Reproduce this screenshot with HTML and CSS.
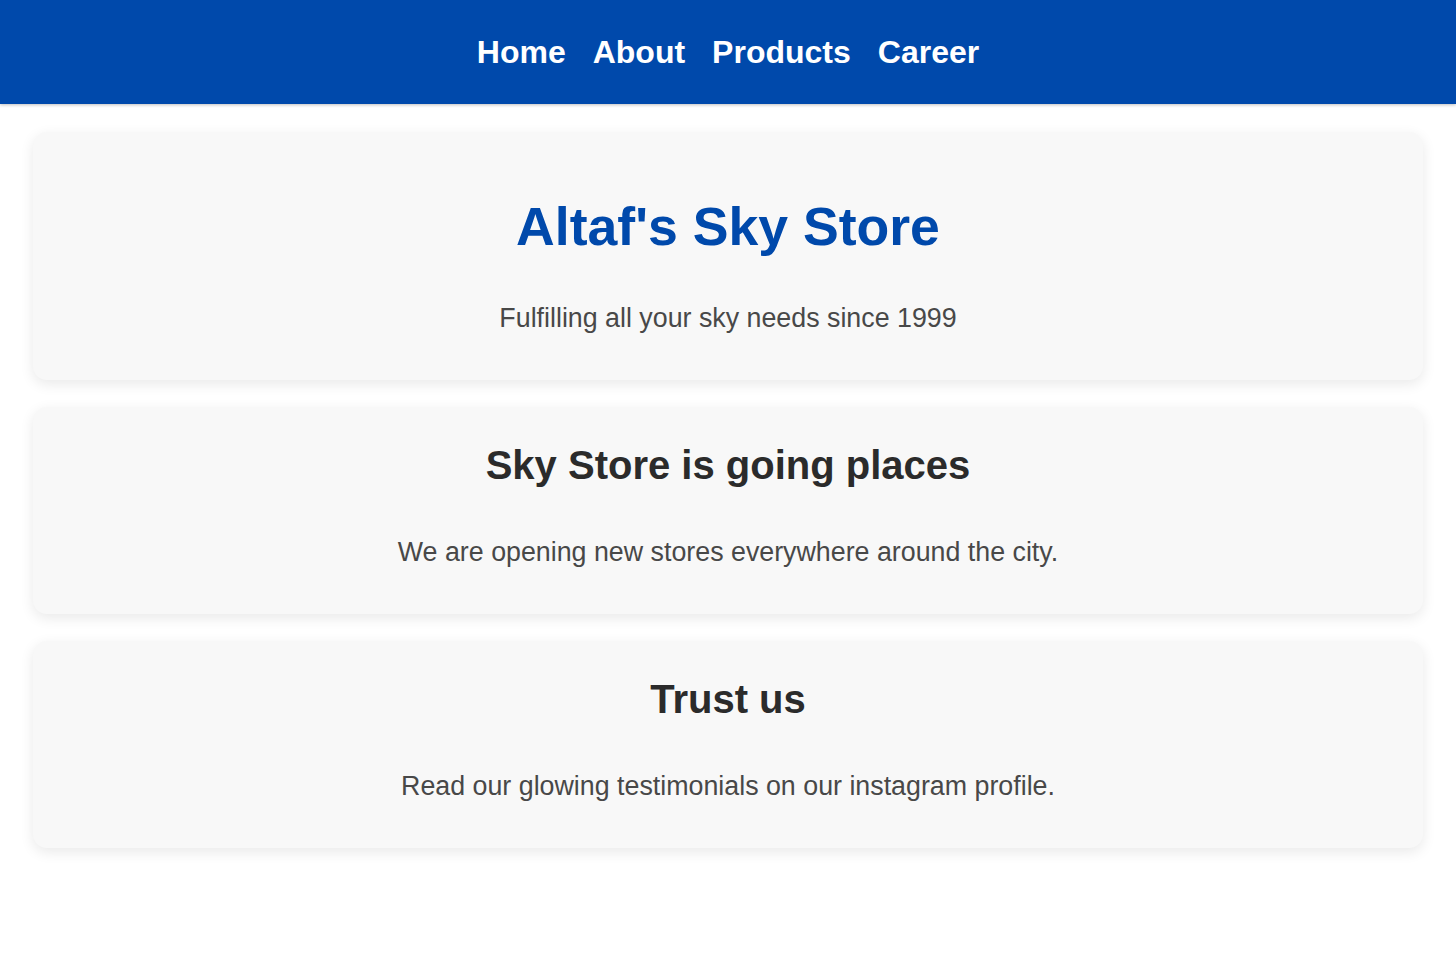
FILE: index.html
```html
<!DOCTYPE html>
<html lang="en">
<head>
<meta charset="utf-8">
<title>Altaf's Sky Store</title>
<link rel="stylesheet" href="styles.css">
</head>
<body>
<header class="site-header">
  <nav class="nav">
    <a class="nav-link" href="#">Home</a>
    <a class="nav-link" href="#">About</a>
    <a class="nav-link" href="#">Products</a>
    <a class="nav-link" href="#">Career</a>
  </nav>
</header>
<main class="content">
  <section class="card card-hero">
    <h1 class="hero-title">Altaf's Sky Store</h1>
    <p class="card-text">Fulfilling all your sky needs since 1999</p>
  </section>
  <section class="card">
    <h2 class="card-title">Sky Store is going places</h2>
    <p class="card-text">We are opening new stores everywhere around the city.</p>
  </section>
  <section class="card">
    <h2 class="card-title">Trust us</h2>
    <p class="card-text">Read our glowing testimonials on our instagram profile.</p>
  </section>
</main>
</body>
</html>
```
FILE: styles.css
```css
* { box-sizing: border-box; }
html, body {
  margin: 0;
  padding: 0;
  background: #ffffff;
  font-family: "Liberation Sans", Arial, Helvetica, sans-serif;
}
.site-header {
  background: #0049ab;
  height: 104px;
  padding-top: 34px;
  box-shadow: 0 1px 3px rgba(0, 0, 0, 0.25);
}
.nav {
  display: flex;
  justify-content: center;
  gap: 27px;
}
.nav-link {
  color: #ffffff;
  text-decoration: none;
  font-weight: bold;
  font-size: 32px;
  line-height: 37px;
}
.content {
  display: flex;
  flex-direction: column;
  gap: 27px;
  padding: 28px 33px 40px;
}
.card {
  background: #f8f8f8;
  border-radius: 14px;
  box-shadow: 0 4px 14px rgba(0, 0, 0, 0.09);
  text-align: center;
  padding: 35px 32px 47px;
}
.card-hero {
  padding: 63px 32px 47px;
}
.hero-title {
  margin: 0 0 46px;
  color: #0049ab;
  font-size: 53.6px;
  line-height: 62px;
  font-weight: bold;
}
.card-title {
  margin: 0 0 49px;
  color: #2b2b2b;
  font-size: 40px;
  line-height: 46px;
  font-weight: bold;
}
.card-text {
  margin: 0;
  color: #484848;
  font-size: 26.8px;
  line-height: 30px;
}
```
